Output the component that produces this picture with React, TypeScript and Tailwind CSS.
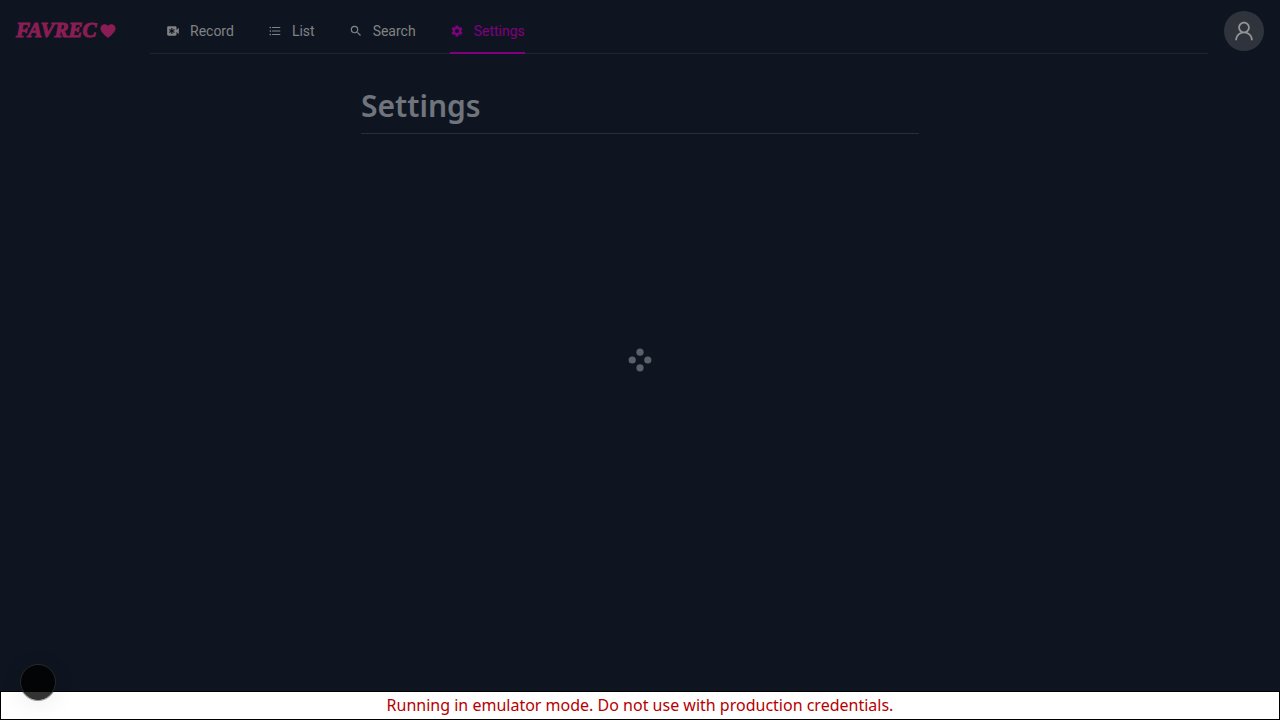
import { AiOutlineUser } from "react-icons/ai";
import {
  MdEmergencyRecording,
  MdFavorite,
  MdFormatListBulleted,
  MdSearch,
  MdSettings,
} from "react-icons/md";

const links = [
  { label: "Record", icon: MdEmergencyRecording, active: false },
  { label: "List", icon: MdFormatListBulleted, active: false },
  { label: "Search", icon: MdSearch, active: false },
  { label: "Settings", icon: MdSettings, active: true },
];

function Header() {
  return (
    <header className="flex items-start px-4">
      <a
        href="#home"
        className="flex h-[61px] w-[134px] items-center gap-0.5 font-['Liberation_Serif',serif] text-[21px] font-bold italic text-[#8b1d55] [-webkit-text-stroke:1px_#8b1d55]"
      >
        FAVREC
        <MdFavorite className="size-[18px]" aria-hidden="true" />
      </a>
      <nav className="flex h-[54px] flex-1 gap-[34px] border-b border-[#20262f] px-4 font-[Roboto,sans-serif] text-sm">
        {links.map(({ label, icon: Icon, active }) => (
          <a
            key={label}
            href={`#${label.toLowerCase()}`}
            aria-current={active ? "page" : undefined}
            className={
              active
                ? "-mb-px flex items-center gap-2.5 border-b-2 border-[#800080] pt-2.5 text-[#800080]"
                : "-mb-px flex items-center gap-2.5 border-b-2 border-transparent pt-2.5 text-[#808285]"
            }
          >
            <Icon className="size-3.5" aria-hidden="true" />
            {label}
          </a>
        ))}
      </nav>
      <button
        type="button"
        aria-label="Account"
        className="mt-[11px] ml-4 flex size-10 items-center justify-center rounded-full bg-[#2f343c] text-[#929497]"
      >
        <AiOutlineUser className="size-6" aria-hidden="true" />
      </button>
    </header>
  );
}

function Spinner() {
  return (
    <svg
      role="status"
      aria-label="Loading"
      viewBox="0 0 24 24"
      className="size-6 fill-[#5b6069]"
    >
      <circle cx="12" cy="4.2" r="3.6" />
      <circle cx="4.2" cy="12" r="3.6" />
      <circle cx="19.8" cy="12" r="3.6" />
      <circle cx="12" cy="19.8" r="3.6" />
    </svg>
  );
}

export default function App() {
  return (
    <div className="flex min-h-screen flex-col bg-[#0f1520] font-['Noto_Sans',sans-serif]">
      <Header />
      <main className="mx-auto w-full max-w-[558px] flex-1 pt-[25px]">
        <h1 className="border-b border-[#292f38] pb-[7px] text-3xl/10 font-semibold text-[#70757d]">
          Settings
        </h1>
      </main>
      <div className="pointer-events-none fixed inset-0 flex items-center justify-center">
        <Spinner />
      </div>
      <p className="border border-black bg-white text-center text-base/[27px] text-[#b50000]">
        Running in emulator mode. Do not use with production credentials.
      </p>
      <button
        type="button"
        aria-label="Open developer tools"
        className="fixed bottom-5 left-5 size-9 rounded-full border border-[#292929] bg-black/80 shadow-[0_1px_0_rgba(0,0,0,0.4),0_4px_24px_rgba(0,0,0,0.08)]"
      />
    </div>
  );
}
